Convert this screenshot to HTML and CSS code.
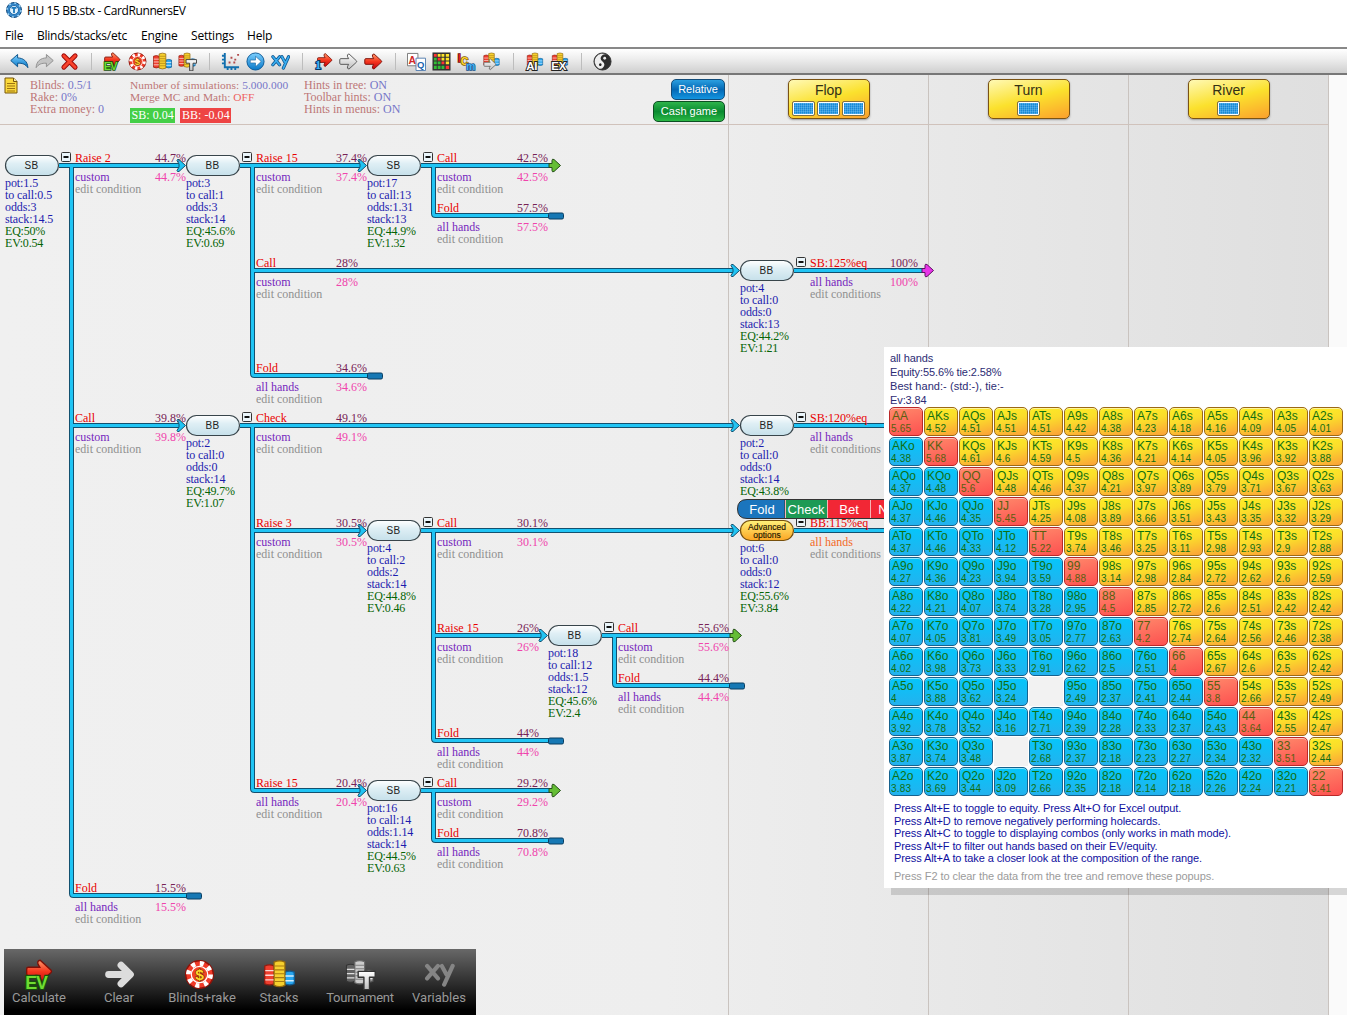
FILE: index.html
```html
<!DOCTYPE html>
<html lang="en">
<head>
<meta charset="utf-8">
<title>HU 15 BB.stx - CardRunnersEV</title>
<link rel="stylesheet" href="styles.css">
</head>
<body>
<svg class="sprite" aria-hidden="true">
  <defs>
    <linearGradient id="gRed" x2="0" y2="1"><stop offset="0" stop-color="#ff9a6a"/><stop offset=".5" stop-color="#f5371f"/><stop offset="1" stop-color="#c4000b"/></linearGradient>
    <linearGradient id="gBlue" x2="0" y2="1"><stop offset="0" stop-color="#7dd0ff"/><stop offset="1" stop-color="#0878c8"/></linearGradient>
    <linearGradient id="gSilver" x2="0" y2="1"><stop offset="0" stop-color="#fff"/><stop offset="1" stop-color="#bdbdbd"/></linearGradient>
    <linearGradient id="gPill" x2="0" y2="1"><stop offset="0" stop-color="#fff"/><stop offset=".4" stop-color="#dfeff5"/><stop offset="1" stop-color="#c6e0ea"/></linearGradient>
    <linearGradient id="gGold" x2="0" y2="1"><stop offset="0" stop-color="#fff27a"/><stop offset="1" stop-color="#fba524"/></linearGradient>
  </defs>
  <symbol id="i-undo" viewBox="0 0 20 20"><path d="M.8 9 8 2.600v3.600c6 .2 10.500 3.400 10.800 10.300-2.500-3.700-5.800-4.900-10.800-4.700v3.700z" fill="url(#gBlue)" stroke="#0a5088" stroke-linejoin="round"/></symbol>
  <symbol id="i-redo" viewBox="0 0 20 20"><path d="M19.200 9 12 2.600v3.600C6 6.400 1.500 9.600 1.200 16.500c2.500-3.700 5.800-4.900 10.800-4.700v3.700z" fill="#c4c4c4" stroke="#8e8e8e" stroke-linejoin="round"/></symbol>
  <symbol id="i-x" viewBox="0 0 20 20"><path d="M4 4l12 12M16 4 4 16" stroke="#9c0a0a" stroke-width="5" stroke-linecap="round"/><path d="M4 4l12 12M16 4 4 16" stroke="#f8432c" stroke-width="3" stroke-linecap="round"/></symbol>
  <symbol id="i-arrow" viewBox="0 0 20 20"><path d="M2 7h8.200L9 5q-1-2.600 1.500-3l7.800 7.200q.7.800 0 1.600L10.500 18Q8 17.600 9 15l1.200-2H2q-1.200 0-1.200-1.200V8.200Q.8 7 2 7z" fill="url(#gRed)" stroke="#7d1008"/></symbol>
  <symbol id="i-arroww" viewBox="0 0 20 20"><path d="M2 7h8.200L9 5q-1-2.600 1.500-3l7.800 7.200q.7.800 0 1.600L10.500 18Q8 17.600 9 15l1.200-2H2q-1.200 0-1.200-1.200V8.200Q.8 7 2 7z" fill="url(#gSilver)" stroke="#555"/></symbol>
  <symbol id="i-clear" viewBox="0 0 20 20"><path d="M3 10h12M11 4l6 6-6 6" fill="none" stroke="#dcdcdc" stroke-width="4.500" stroke-linecap="round" stroke-linejoin="round"/></symbol>
  <symbol id="i-ev" viewBox="0 0 20 20"><svg x="1" y="-1" width="18" height="18"><use href="#i-arrow"/></svg><text x=".8" y="19.300" class="t-ev">EV</text></symbol>
  <symbol id="i-one" viewBox="0 0 20 20"><svg x="3" y="0" width="17" height="17"><use href="#i-arrow"/></svg><text x="1" y="18" class="t-one">1</text></symbol>
  <symbol id="i-chip" viewBox="0 0 20 20"><circle cx="10" cy="10" r="8.900" fill="#f03a28" stroke="#8e1208"/><circle cx="10" cy="10" r="7.200" fill="none" stroke="#fff" stroke-width="3" stroke-dasharray="2.600 3.055"/><circle cx="10" cy="10" r="5.300" fill="#ef4426" stroke="#fff" stroke-width=".8"/><text x="10" y="13.700" text-anchor="middle" class="t-chip">$</text></symbol>
  <symbol id="i-stacks" viewBox="0 0 20 20"><path d="M.5 4.500q3-1.500 6 0v11.500q-3 1.500-6 0z" fill="#ef3e2e" stroke="#931c10" stroke-width=".8"/><path d="M13.500 8.500q3-1.300 6 0v7.500q-3 1.500-6 0z" fill="#27a5ef" stroke="#115d94" stroke-width=".8"/><path d="M6.500 2q3.500-1.600 7 0v15q-3.500 1.600-7 0z" fill="#f6d02e" stroke="#94690c" stroke-width=".8"/><path d="M.8 7.500h5.400m-5.400 3h5.400m-5.400 3h5.400M13.800 11h5.400m-5.400 3h5.400" stroke="#fff" stroke-width=".9" opacity=".8"/><path d="M6.800 4.500h6.400M6.800 7h6.400M6.800 9.500h6.400M6.800 12h6.400m-6.400 2.500h6.400" stroke="#a97b12" stroke-width=".7"/></symbol>
  <symbol id="i-stackt" viewBox="0 0 20 20"><svg x="0" y="0" width="19" height="18"><use href="#i-stacks"/></svg><path d="M8.500 8h11v3.800h-3.700v8h-3.600v-8H8.500z" fill="url(#gSilver)" stroke="#333" stroke-width=".9" stroke-linejoin="round"/></symbol>
  <symbol id="i-plot" viewBox="0 0 20 20"><path d="M4 1v15h15M1 4h3M1 8h3M1 12h3M7 16v3m4-3v3m4-3v3" fill="none" stroke="#126fae" stroke-width="2"/><path d="M8 11h2m0-5h2m2 2h2m1-5h2m-6 8h2" stroke="#b34b4b" stroke-width="2"/></symbol>
  <symbol id="i-go" viewBox="0 0 20 20"><circle cx="10" cy="10" r="9" fill="url(#gBlue)" stroke="#0a5796"/><path d="M4.500 8.500H10v-4l6 5.500-6 5.500v-4H4.500z" fill="#fff" stroke="#115b95" stroke-width=".6"/></symbol>
  <symbol id="i-xy" viewBox="0 0 20 20"><g fill="none" stroke-linecap="round"><path d="m2 5 7 8.500M9 5l-7 8.500M11.500 5l3 5.500M18.500 5l-5.500 12" stroke="#0d548e" stroke-width="3.400"/><path d="m2 5 7 8.500M9 5l-7 8.500M11.500 5l3 5.500M18.500 5l-5.500 12" stroke="#3baef0" stroke-width="1.800"/></g></symbol>
  <symbol id="i-vars" viewBox="0 0 20 20"><path d="m2 4.500 7 8M9 4.500l-7 8M11.500 4.500l3 5.500M18.500 4.500l-5.500 12" fill="none" stroke="#858585" stroke-width="2.700" stroke-linecap="round"/></symbol>
  <symbol id="i-aq" viewBox="0 0 20 20"><path d="M.5 1.500h11v13H.5z" fill="#fff" stroke="#777"/><text x="1.500" y="12.500" class="t-a">A</text><path d="M9.500 6.500h10v13h-10z" fill="#fff" stroke="#557eb0"/><text x="10.500" y="16.500" class="t-q">Q</text></symbol>
  <symbol id="i-grid" viewBox="0 0 20 20"><path d="M.5.500h19v19H.5z" fill="#333"/><path d="M2 2h3v3H2zM6 6h3v3H6zm4 4h3v3h-3zm4.500 4.500h3.500V18h-3.500z" fill="#f33"/><path d="M6 2h3v3H6zm4 0h3v3h-3zm4.500 0H18v3h-3.500zM10 6h3v3h-3zm4.500 0H18v3h-3.500zm0 4H18v3h-3.500z" fill="#ffe52a"/><path d="M2 6h3v3H2zm0 4h3v3H2zm4 0h3v3H6zm-4 4.500h3V18H2zm4 0h3V18H6zm4 0h3V18h-3z" fill="#32be35"/></symbol>
  <symbol id="i-icm" viewBox="0 0 20 20"><text x=".8" y="10" class="t-i">I</text><text x="4" y="14" class="t-c">C</text><text x="9.500" y="19" class="t-m">m</text></symbol>
  <symbol id="i-stacka" viewBox="0 0 20 20"><svg x="0" y="0" width="20" height="17"><use href="#i-stacks"/></svg><svg x="1" y="6" width="15" height="14"><use href="#i-arroww"/></svg></symbol>
  <symbol id="i-ai" viewBox="0 0 20 20"><svg x="1" y="0" width="19" height="17"><use href="#i-stacks"/></svg><text x="1.200" y="18.700" class="t-ai">AI</text></symbol>
  <symbol id="i-ex" viewBox="0 0 20 20"><svg x="1" y="0" width="19" height="17"><use href="#i-stacks"/></svg><text x="1.200" y="18.700" class="t-ai">EX</text></symbol>
  <symbol id="i-yin" viewBox="0 0 20 20"><circle cx="10" cy="10" r="9" fill="#2d2d2d" stroke="#333"/><g transform="rotate(35 10 10)"><path d="M10 1.800a8.200 8.200 0 0 0 0 16.400 4.100 4.100 0 0 0 0-8.200 4.100 4.100 0 0 1 0-8.200z" fill="#eee"/><circle cx="10" cy="5.900" r="1.400" fill="#222"/><circle cx="10" cy="14.100" r="1.400" fill="#222"/></g><circle cx="12.300" cy="6.600" r="1.500" fill="#eee"/></symbol>
</svg>

<header class="titlebar">
  <svg class="logo" viewBox="0 0 18 18"><circle cx="9" cy="9" r="7.500" fill="#3588ca" stroke="#174b7c"/><circle cx="9" cy="9" r="7" fill="none" stroke="#9fd2f3" stroke-width="1.500" stroke-dasharray="2 3.500"/><circle cx="9" cy="9" r="4.500" fill="#e2f3fd" stroke="#1c68a8"/><path d="M6.500 6.800h5M9 7v5" stroke="#1c79bd" stroke-width="1.800"/></svg>
  <span class="title">HU 15 BB.stx - CardRunnersEV</span>
</header>
<nav class="menu"><span class="m1">File</span><span class="m2">Blinds/stacks/etc</span><span class="m3">Engine</span><span class="m4">Settings</span><span class="m5">Help</span></nav>
<div class="toolbar">
  <svg><use href="#i-undo"/></svg><svg><use href="#i-redo"/></svg><svg><use href="#i-x"/></svg><i></i>
  <svg><use href="#i-ev"/></svg><svg><use href="#i-chip"/></svg><svg><use href="#i-stacks"/></svg><svg><use href="#i-stackt"/></svg><i></i>
  <svg><use href="#i-plot"/></svg><svg><use href="#i-go"/></svg><svg><use href="#i-xy"/></svg><i></i>
  <svg><use href="#i-one"/></svg><svg><use href="#i-arroww"/></svg><svg><use href="#i-arrow"/></svg><i></i>
  <svg><use href="#i-aq"/></svg><svg><use href="#i-grid"/></svg><svg><use href="#i-icm"/></svg><svg><use href="#i-stacka"/></svg><i></i>
  <svg><use href="#i-ai"/></svg><svg><use href="#i-ex"/></svg><i></i>
  <svg><use href="#i-yin"/></svg>
</div>

<main class="workspace">
  <div class="streets">
    <section class="preflop">
      <svg class="note" viewBox="0 0 14 17"><path d="M1 1h8.500L13 4.500V16H1z" fill="#fbd93c" stroke="#76570c"/><path d="M9.500 1v3.500H13" fill="#fff3a0" stroke="#76570c"/><path d="M3 6.500h8M3 9h8m-8 2.500h8M3 14h8" stroke="#9c7410"/></svg>
      <div class="stats c1"><p>Blinds: <b>0.5/1</b></p><p>Rake: <b>0%</b></p><p>Extra money: <b>0</b></p></div>
      <div class="stats c2"><p>Number of simulations: <b>5.000.000</b></p><p>Merge MC and Math: <em>OFF</em></p>
        <div class="evs"><span class="sb">SB: 0.04</span><span class="bb">BB: -0.04</span></div></div>
      <div class="stats c3"><p>Hints in tree: <b>ON</b></p><p>Toolbar hints: <b>ON</b></p><p>Hints in menus: <b>ON</b></p></div>
      <div class="modes"><span class="relative">Relative</span><span class="cash">Cash game</span></div>
    </section>
    <section class="street flop"><div class="board"><span>Flop</span><div><i></i><i></i><i></i></div></div></section>
    <section class="street turn"><div class="board"><span>Turn</span><div><i></i></div></div></section>
    <section class="street river"><div class="board"><span>River</span><div><i></i></div></div></section>
  </div>
  <svg class="tree" id="tree" viewBox="0 75 1347 940" width="1347" height="940"></svg>

  <aside class="popup">
    <div class="summary"><p>all hands</p><p>Equity:55.6% tie:2.58%</p><p class="best">Best hand:- (std:-), tie:-</p><p>Ev:3.84</p></div>
    <div class="range" id="range"></div>
    <div class="help">
      <p>Press Alt+E to toggle to equity. Press Alt+O for Excel output.</p>
      <p>Press Alt+D to remove negatively performing holecards.</p>
      <p>Press Alt+C to toggle to displaying combos (only works in math mode).</p>
      <p>Press Alt+F to filter out hands based on their EV/equity.</p>
      <p>Press Alt+A to take a closer look at the composition of the range.</p>
      <p class="muted">Press F2 to clear the data from the tree and remove these popups.</p>
    </div>
  </aside>

  <footer class="dock">
    <div class="d1"><svg><use href="#i-ev"/></svg><span>Calculate</span></div>
    <div class="d2"><svg><use href="#i-clear"/></svg><span>Clear</span></div>
    <div class="d3"><svg><use href="#i-chip"/></svg><span>Blinds+rake</span></div>
    <div class="d4"><svg><use href="#i-stacks"/></svg><span>Stacks</span></div>
    <div class="d5"><svg class="gray"><use href="#i-stackt"/></svg><span>Tournament</span></div>
    <div class="d6"><svg><use href="#i-vars"/></svg><span>Variables</span></div>
  </footer>
</main>
<script src="app.js"></script>
</body>
</html>
```
FILE: styles.css
```css
* { box-sizing: border-box; }
body { margin: 0; width: 1347px; height: 1015px; overflow: hidden; background: #fff; font-family: "Liberation Sans", Arial, sans-serif; }
p { margin: 0; white-space: nowrap; }
.sprite { position: absolute; width: 0; height: 0; }

.titlebar { height: 22px; display: flex; align-items: center; padding-left: 5px; }
.logo { width: 18px; height: 18px; margin-top: -2px; }
.title { margin-left: 4px; font: 12px/20px "Open Sans", "Noto Sans", sans-serif; letter-spacing: -0.4px; }
.menu { height: 25px; display: flex; font: 12px/27px "Open Sans", "Noto Sans", sans-serif; letter-spacing: -0.2px; white-space: nowrap; }
.menu span { flex: none; }
.m1 { width: 32px; margin-left: 5px; }
.m2 { width: 104px; letter-spacing: -0.25px; }
.m3 { width: 50px; }
.m4 { width: 56px; }

.toolbar { height: 28px; display: flex; align-items: center; padding-left: 6.5px; border-top: 2px solid #888; border-bottom: 2px solid #777; background: linear-gradient(#fff, #eee 40%, #cfcfcf); }
.toolbar svg { width: 19px; height: 19px; margin: 0 3px; flex: none; }
.toolbar i { width: 1px; height: 17px; margin: 0 8px 0 9px; background: #bdbdbd; }
.t-ev { font: bold 11.500px "Liberation Sans", sans-serif; fill: #6edc32; stroke: #174f0b; stroke-width: 1.600px; paint-order: stroke; letter-spacing: -.8px; }
.t-one { font: bold 13px "Liberation Serif", serif; fill: #41b0f5; stroke: #053765; stroke-width: 2px; paint-order: stroke; }
.t-chip { font: bold 10px "Liberation Sans", sans-serif; fill: #ffd52d; stroke: #752500; stroke-width: .8px; paint-order: stroke; }
.t-a { font: bold 11px "Liberation Sans", sans-serif; fill: #d02828; }
.t-q { font: bold 10px "Liberation Sans", sans-serif; fill: #1b64ae; }
.t-i, .t-c, .t-m { font: bold 11px "Liberation Sans", sans-serif; stroke-width: 1.500px; paint-order: stroke; fill: #e32222; stroke: #6c0b0b; }
.t-c { fill: #ffd52d; stroke: #7a5607; }
.t-m { fill: #46b2f5; stroke: #0e4f89; }
.t-ai { font: bold 12px "Liberation Sans", sans-serif; fill: #fff; stroke: #222; stroke-width: 2px; paint-order: stroke; }

.workspace { position: relative; height: 940px; background: #fafafa; }
.streets { display: flex; width: 1329px; height: 940px; background: linear-gradient(90deg, #f0f0f0, #eee 50%, #eaeaea 65%, #dfdfdf); }
.preflop { width: 728px; display: flex; align-items: flex-start; }
.preflop, .street { background: linear-gradient(#d0c2bb, #d0c2bb) 0 49px / 100% 1px no-repeat; }
.street { width: 200px; padding-top: 4px; border-left: 1px solid #c9c3bf; display: flex; justify-content: center; align-items: flex-start; }
.river { width: 201px; border-right: 1px solid #c9c3bf; }
.note { width: 14px; height: 17px; margin: 2px 0 0 4px; }
.stats { font: 12px/12px "Liberation Serif", "Times New Roman", serif; color: #bd7777; padding-top: 4px; flex: none; }
.stats b { font-weight: normal; color: #7676c8; }
.stats em { font-style: normal; color: #ee6262; }
.c1 { width: 100px; margin-left: 12px; }
.c2 { width: 174px; font-size: 11.400px; letter-spacing: .05px; }
.c3 { width: 120px; }
.evs { display: flex; gap: 5px; margin-top: 5px; font-size: 12px; line-height: 15px; color: #fff; }
.evs span { padding: 0 1.500px; }
.sb { background: #44cf47; }
.bb { background: #ee4444; }
.modes { margin-left: auto; padding: 4px 3px 0 0; display: flex; flex-direction: column; align-items: flex-end; gap: 1px; }
.modes span { height: 21px; border-radius: 5px; color: #fff; font-size: 11px; line-height: 19px; text-align: center; border: 1px solid #124c79; }
.relative { width: 54px; background: linear-gradient(#2a9fe0, #0468b4 50%, #1495e0); }
.modes .cash { width: 72px; border-color: #0c4f22; background: linear-gradient(#2eb44b, #098a30 50%, #2bb845); }
.board { width: 82px; height: 40px; border: 1px solid #7b5313; border-radius: 5px; background: linear-gradient(165deg, #fff9b5, #fbe12d 50%, #fba02d); box-shadow: 0 1px 2px #999; text-align: center; color: #333015; font-size: 14px; line-height: 21px; }
.board div { display: flex; justify-content: center; gap: 2px; }
.board i { width: 23px; height: 15px; border: 1px solid #83703c; border-radius: 2px; background: repeating-linear-gradient(90deg, #ffffff30 0 1px, transparent 1px 2px), repeating-linear-gradient(#1688d6 0 1px, #2f9de4 1px 2px); box-shadow: inset 0 0 0 1px #fff; }

.tree { position: absolute; left: 0; top: 0; font: 12px "Liberation Serif", "Times New Roman", serif; }
.edge-out { stroke: #12506f; stroke-width: 5; fill: none; }
.edge-in { stroke: #20c4f4; stroke-width: 3; fill: none; }
.tip { stroke: #12506f; stroke-linejoin: round; fill: #20c4f4; }
.tip.green { fill: #65bd35; stroke: #254f18; }
.tip.magenta { fill: #e735e7; stroke: #5c1061; }
.stop { fill: #1678b4; stroke: #083e62; }
.pill { fill: url(#gPill); stroke: #38454b; stroke-width: 1.200; }
.pill.gold { fill: url(#gGold); stroke: #76500d; }
.seat { font: 10px "Liberation Sans", Arial, sans-serif; fill: #222; text-anchor: middle; letter-spacing: .3px; }
.adv { font: 8.500px "Liberation Sans", Arial, sans-serif; fill: #201500; text-anchor: middle; stroke: #201500; stroke-width: .15px; }
.info { fill: #1c1cae; letter-spacing: -.08px; }
.ev { fill: #056405; letter-spacing: -.2px; }
.action { fill: #e80000; }
.pct { fill: #772255; }
.pct2 { fill: #f044ac; }
.cond { fill: #7626bd; }
.cond.hot { fill: #f36a28; }
.edit { fill: #909090; }
.toggle { fill: #eaf5fa; stroke: #333; }
.minus { stroke: #111; stroke-width: 2; }
.btn { font: 13px "Liberation Sans", Arial, sans-serif; fill: #fff; text-anchor: middle; }

.popup { position: absolute; left: 884px; top: 272px; width: 463px; height: 541px; background: #fff; box-shadow: 7px 7px 0 rgba(0, 0, 0, .14); padding: 4px 0 0 5px; }
.summary { font-size: 11px; line-height: 14px; color: #2c2c74; padding-left: 1px; height: 56px; letter-spacing: -.1px; }
.summary .best { letter-spacing: .05px; }
.range { display: grid; grid-template-columns: repeat(13, 34px); gap: 1px; grid-auto-rows: 29px; }
.hand { border: 1px solid #9c6915; border-radius: 5px; padding: 2px 0 0 2px; background: linear-gradient(165deg, #fdef25, #fbdc2b 45%, #fba038); color: #107010; font-size: 12px; line-height: 12px; white-space: nowrap; box-shadow: inset 0 1px 0 #fff8; }
.hand small { display: block; font-size: 10px; line-height: 11px; margin: 1px 0 0 -1px; letter-spacing: .2px; }
.hand.offsuit { border-color: #16628e; background: linear-gradient(#05c6fb, #23b2ee); }
.hand.pair { border-color: #ba2828; background: linear-gradient(165deg, #ff8a6b, #fd5050); }
.hand.pair { color: #5a6010; }
.hand.empty { border: 0; border-radius: 0; background: #f2f2f2; box-shadow: none; }
.help { padding: 6px 0 0 5px; font-size: 11px; line-height: 12.500px; color: #1010a0; letter-spacing: -.1px; }
.help .muted { color: #9b9b9b; margin-top: 5.5px; letter-spacing: -.07px; }

.dock { position: absolute; left: 4px; top: 874px; width: 472px; height: 66px; display: flex; background: linear-gradient(#686868, #000 92%); }
.dock div { display: flex; flex-direction: column; align-items: center; padding-top: 10px; color: #999; font: 13px/16px Roboto, sans-serif; }
.dock svg { width: 31px; height: 31px; flex: none; }
.dock .gray { filter: grayscale(1); }
.d1 { width: 70px; } .d2 { width: 90px; } .d3 { width: 76px; } .d4 { width: 78px; } .d5 { width: 84px; } .d6 { width: 74px; }
.d3 svg { margin-left: -5px; }
.d5 span { letter-spacing: -.25px; }
```
FILE: app.js
```js
// Decision tree: x and y give the centre-line start of each node.
// Branch: [y, action, share, condition, end kind, end x]
const nodes = [
  { x: 5, y: 165.5, seat: 'SB', info: ['pot:1.5', 'to call:0.5', 'odds:3', 'stack:14.5', 'EQ:50%', 'EV:0.54'],
    out: [[165.5, 'Raise 2', '44.7%', 'custom', 'node', 186], [425.5, 'Call', '39.8%', 'custom', 'node', 186], [895.5, 'Fold', '15.5%', 'all hands', 'fold']] },
  { x: 186, y: 165.5, seat: 'BB', info: ['pot:3', 'to call:1', 'odds:3', 'stack:14', 'EQ:45.6%', 'EV:0.69'],
    out: [[165.5, 'Raise 15', '37.4%', 'custom', 'node', 367], [270.5, 'Call', '28%', 'custom', 'node', 740], [375.5, 'Fold', '34.6%', 'all hands', 'fold']] },
  { x: 367, y: 165.5, seat: 'SB', info: ['pot:17', 'to call:13', 'odds:1.31', 'stack:13', 'EQ:44.9%', 'EV:1.32'],
    out: [[165.5, 'Call', '42.5%', 'custom', 'green'], [215.5, 'Fold', '57.5%', 'all hands', 'fold']] },
  { x: 740, y: 270.5, seat: 'BB', info: ['pot:4', 'to call:0', 'odds:0', 'stack:13', 'EQ:44.2%', 'EV:1.21'],
    out: [[270.5, 'SB:125%eq', '100%', 'all hands', 'magenta']] },
  { x: 186, y: 425.5, seat: 'BB', info: ['pot:2', 'to call:0', 'odds:0', 'stack:14', 'EQ:49.7%', 'EV:1.07'],
    out: [[425.5, 'Check', '49.1%', 'custom', 'node', 740], [530.5, 'Raise 3', '30.5%', 'custom', 'node', 367], [790.5, 'Raise 15', '20.4%', 'all hands', 'node', 367]] },
  { x: 740, y: 425.5, seat: 'BB', info: ['pot:2', 'to call:0', 'odds:0', 'stack:14', 'EQ:43.8%'],
    out: [[425.5, 'SB:120%eq', '', 'all hands', 'green']] },
  { x: 367, y: 530.5, seat: 'SB', info: ['pot:4', 'to call:2', 'odds:2', 'stack:14', 'EQ:44.8%', 'EV:0.46'],
    out: [[530.5, 'Call', '30.1%', 'custom', 'node', 740], [635.5, 'Raise 15', '26%', 'custom', 'node', 548], [740.5, 'Fold', '44%', 'all hands', 'fold']] },
  { x: 740, y: 530.5, seat: 'ADV', info: ['pot:6', 'to call:0', 'odds:0', 'stack:12', 'EQ:55.6%', 'EV:3.84'],
    out: [[530.5, 'BB:115%eq', '', 'all hands', 'green']] },
  { x: 548, y: 635.5, seat: 'BB', info: ['pot:18', 'to call:12', 'odds:1.5', 'stack:12', 'EQ:45.6%', 'EV:2.4'],
    out: [[635.5, 'Call', '55.6%', 'custom', 'green'], [685.5, 'Fold', '44.4%', 'all hands', 'fold']] },
  { x: 367, y: 790.5, seat: 'SB', info: ['pot:16', 'to call:14', 'odds:1.14', 'stack:14', 'EQ:44.5%', 'EV:0.63'],
    out: [[790.5, 'Call', '29.2%', 'custom', 'green'], [840.5, 'Fold', '70.8%', 'all hands', 'fold']] }
];

const text = (x, y, cls, s) => s ? `<text x="${x}" y="${y}" class="${cls}">${s}</text>` : '';
let edges = '', tips = '', labels = '', pills = '';

for (const n of nodes) {
  const { x, y } = n;
  let d = '';
  for (const [by, action, share, cond, kind, endX] of n.out) {
    const end = kind === 'node' ? endX - 7 : x + 182;
    d += by === y ? `M${x + 54} ${y}H${end}` : `M${x + 66.5} ${y}V${by - 2}q0 2 2 2H${end}`;
    if (kind === 'node') tips += `<path class="tip" d="M${end} ${by - 1.5}l-2-3.500q0-1.500 2-1l6.500 6-6.500 6q-2 .5-2-1l2-3.500z"/>`;
    else if (kind === 'fold') tips += `<rect class="stop" x="${end - .5}" y="${by - 2.5}" width="15" height="6" rx="1.500"/>`;
    else tips += `<path class="tip ${kind}" d="M${end} ${by - 2}h3v-3q0-2 2-1l6.500 6-6.500 6q-2 1-2-1v-3h-3z"/>`;
    labels += text(x + 70, by - 3.5, 'action', action) + text(x + 150, by - 3.5, 'pct', share)
      + text(x + 70, by + 15.5, n.seat === 'ADV' ? 'cond hot' : 'cond', cond) + text(x + 150, by + 15.5, 'pct2', share)
      + text(x + 70, by + 27.5, 'edit', x === 740 ? 'edit conditions' : 'edit condition');
  }
  edges += `<path class="edge-out" d="${d}"/><path class="edge-in" d="${d}"/>`;
  n.info.forEach((s, i) => { labels += text(x, y + 21.5 + i * 12, i > 3 ? 'ev' : 'info', s); });
  const gold = n.seat === 'ADV';
  pills += `<rect class="pill${gold ? ' gold' : ''}" x="${x + .5}" y="${y - 10}" width="53" height="20" rx="10"/>`
    + (gold ? text(x + 27, y - 1, 'adv', 'Advanced') + text(x + 27, y + 7, 'adv', 'options') : text(x + 26.5, y + 3.5, 'seat', n.seat))
    + `<rect class="toggle" x="${x + 56.5}" y="${y - 13}" width="9" height="9" rx="1"/><path class="minus" d="M${x + 58.5} ${y - 8.5}h5"/>`;
}

const menu = `<path d="M747 499.500h38v19h-38q-9.500 0-9.500-9.500t9.500-9.500z" fill="#1b75bd" stroke="#333"/>
  <rect x="785.500" y="499.500" width="42" height="19" fill="#1d9a55" stroke="#333"/>
  <rect x="827.500" y="499.500" width="72" height="19" fill="#f22735" stroke="#333"/>
  <path d="M785.500 500v18M827.500 500v18M870.500 500v18" stroke="#f7b4b4"/>`
  + text(762, 513.5, 'btn', 'Fold') + text(806, 513.5, 'btn', 'Check') + text(849, 513.5, 'btn', 'Bet') + text(883, 513.5, 'btn', 'N');
document.getElementById('tree').innerHTML = edges + tips + labels + pills + menu;

// Starting-hand matrix, one row of EVs per rank; "x" marks a removed hand.
const ranks = 'AKQJT98765432';
const values = [
  '5.65 4.52 4.51 4.51 4.51 4.42 4.38 4.23 4.18 4.16 4.09 4.05 4.01',
  '4.38 5.68 4.61 4.6 4.59 4.5 4.36 4.21 4.14 4.05 3.96 3.92 3.88',
  '4.37 4.48 5.6 4.48 4.46 4.37 4.21 3.97 3.89 3.79 3.71 3.67 3.63',
  '4.37 4.46 4.35 5.45 4.25 4.08 3.89 3.66 3.51 3.43 3.35 3.32 3.29',
  '4.37 4.46 4.33 4.12 5.22 3.74 3.46 3.25 3.11 2.98 2.93 2.9 2.88',
  '4.27 4.36 4.23 3.94 3.59 4.88 3.14 2.98 2.84 2.72 2.62 2.6 2.59',
  '4.22 4.21 4.07 3.74 3.28 2.95 4.5 2.85 2.72 2.6 2.51 2.42 2.42',
  '4.07 4.05 3.81 3.49 3.05 2.77 2.63 4.2 2.74 2.64 2.56 2.46 2.38',
  '4.02 3.98 3.73 3.33 2.91 2.62 2.5 2.51 4 2.67 2.6 2.5 2.42',
  '4 3.88 3.62 3.24 x 2.49 2.37 2.41 2.44 3.8 2.66 2.57 2.49',
  '3.92 3.78 3.52 3.16 2.71 2.39 2.28 2.33 2.37 2.43 3.64 2.55 2.47',
  '3.87 3.74 3.48 x 2.68 2.37 2.18 2.23 2.27 2.34 2.32 3.51 2.44',
  '3.83 3.69 3.44 3.09 2.66 2.35 2.18 2.14 2.18 2.26 2.24 2.21 3.41'
];
document.getElementById('range').innerHTML = values.map((row, i) => row.split(' ').map((v, j) => {
  if (v === 'x') return '<div class="hand empty"></div>';
  const name = i === j ? ranks[i] + ranks[i] : j > i ? ranks[i] + ranks[j] + 's' : ranks[j] + ranks[i] + 'o';
  return `<div class="hand ${i === j ? 'pair' : j > i ? 'suited' : 'offsuit'}">${name}<small>${v}</small></div>`;
}).join('')).join('');
```
